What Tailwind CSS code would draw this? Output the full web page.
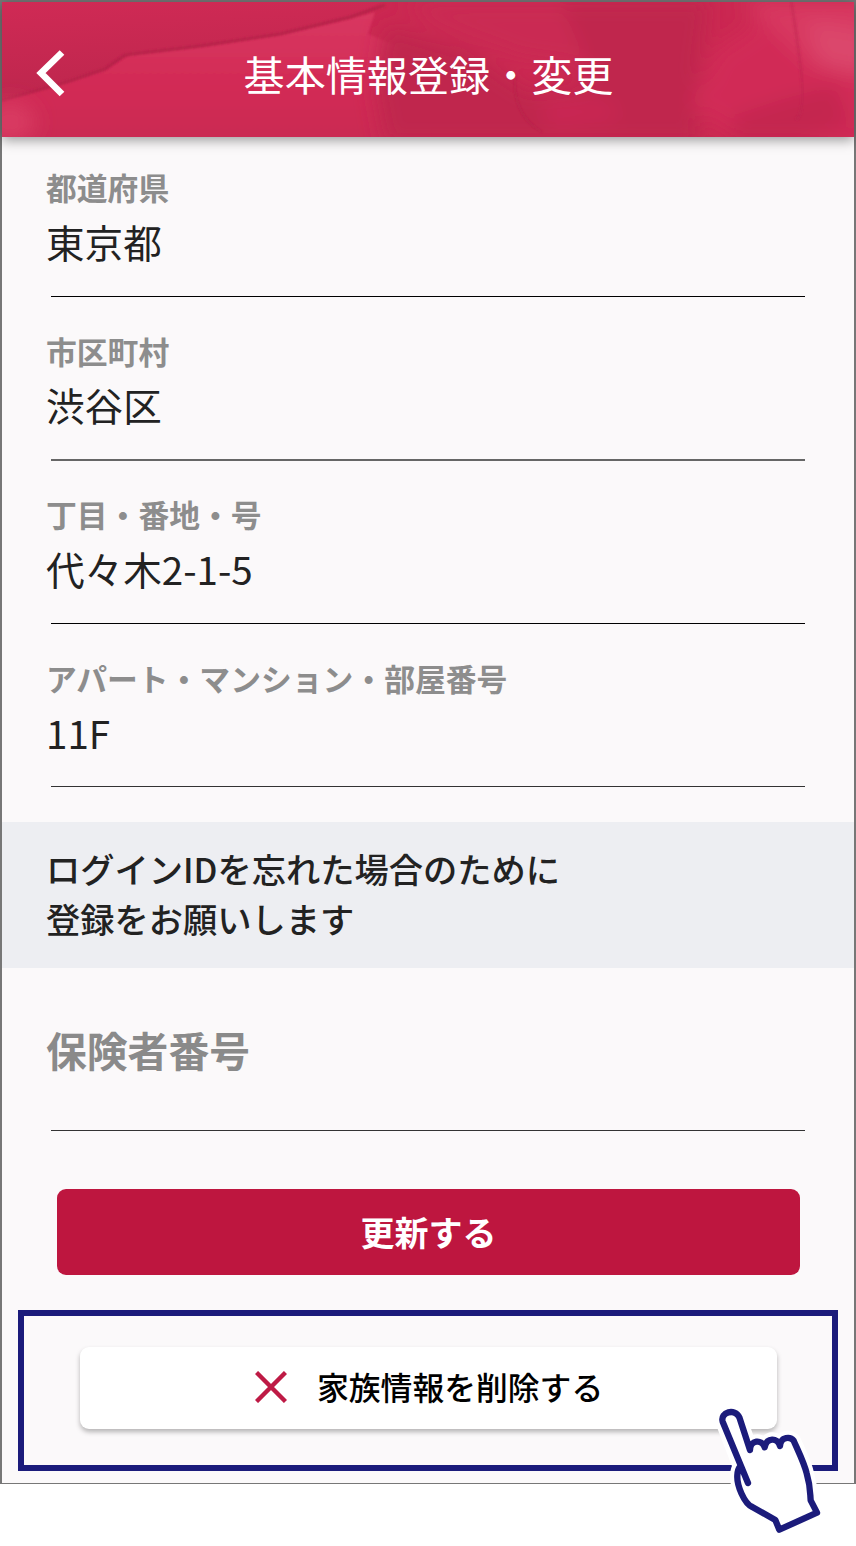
<!DOCTYPE html>
<html lang="ja">
<head>
    <meta charset="UTF-8">
    <meta name="viewport" content="width=device-width, initial-scale=1.0">
    <title>基本情報登録・変更</title>
    <script src="https://cdn.jsdelivr.net/npm/@tailwindcss/browser@4"></script>
</head>
<body class="bg-white font-['Noto_Sans_CJK_JP',sans-serif] text-[#222]">
    <div class="relative w-[856px] h-[1546px] overflow-hidden">
        <div class="flex flex-col h-[1484px] border-2 border-b-[1.5px] border-[#777] bg-[#fbf9fa]">
            <header class="relative z-10 flex items-center justify-center shrink-0 h-[135px] bg-[#cb2851] shadow-[0_3px_12px_rgba(0,0,0,0.4)]">
                <!-- watercolor wash -->
                <svg class="absolute inset-0 w-full h-full" viewBox="2 2 852 135" preserveAspectRatio="none">
                    <defs>
                        <filter id="soft" x="-30%" y="-30%" width="160%" height="160%"><feGaussianBlur stdDeviation="10" /></filter>
                        <filter id="edge" x="-10%" y="-10%" width="120%" height="120%"><feGaussianBlur stdDeviation="1.3" /></filter>
                        <linearGradient id="top" x1="0" y1="0" x2="0.15" y2="1">
                            <stop offset="0" stop-color="#d02a55" />
                            <stop offset="1" stop-color="#bd264d" />
                        </linearGradient>
                        <linearGradient id="sheet" x1="0" y1="0" x2="0" y2="1">
                            <stop offset="0" stop-color="#d93861" />
                            <stop offset="0.6" stop-color="#d22a55" />
                            <stop offset="1" stop-color="#ca2952" />
                        </linearGradient>
                    </defs>
                    <path d="M0 0H385L350 18L280 34L200 46L130 54L105 69L70 81L0 101Z" fill="url(#top)" />
                    <path d="M0 102L70 82L105 70L130 55L200 47L280 35L350 19L375 12L368 34L430 60V140H0Z" fill="url(#sheet)" filter="url(#edge)" />
                    <path d="M0 101L70 81L105 69L125 55L200 46L280 34L350 17L385 5" fill="none" stroke="#b52149" stroke-width="2.5" filter="url(#edge)" />
                    <g filter="url(#soft)">
                        <ellipse cx="10" cy="122" rx="25" ry="20" fill="#d93a62" />
                        <path d="M385 25L470 50L530 90L700 70V145H385L375 90Z" fill="#c0264d" />
                        <path d="M560 0H710L690 145H610L580 70Z" fill="#c0264d" />
                        <path d="M400 0H560L590 70L520 60L430 25Z" fill="#ca2953" />
                        <path d="M540 95L610 100L620 120L550 130Z" fill="#c92852" />
                        <path d="M715 50L790 0H870V145H740L690 105Z" fill="#d12b56" />
                        <path d="M740 0H870V80L810 65Z" fill="#d83760" />
                        <path d="M805 20L870 30V75L820 65Z" fill="#db476c" />
                        <path d="M735 115L780 100L835 85L850 125L790 145H730Z" fill="#c42750" />
                    </g>
                    <path d="M791 0Q796 30 801 70T796 120" fill="none" stroke="#bd2850" stroke-opacity="0.45" stroke-width="3" filter="url(#edge)" />
                    <path d="M515 75Q512 115 542 132" fill="none" stroke="#ae1e46" stroke-opacity="0.4" stroke-width="2" filter="url(#edge)" />
                </svg>
                <button class="absolute left-[34px] top-[47px]" aria-label="戻る">
                    <svg class="block" width="30" height="48" viewBox="0 0 30 48" fill="none" stroke="#fff" stroke-width="6.6"><path d="M26 3.5L5 24L26 45" /></svg>
                </button>
                <h1 class="relative pt-[6px] pl-px text-[41.1px] leading-[60px] font-normal text-white">基本情報登録・変更</h1>
            </header>

            <main class="flex flex-col pt-[27px]">
                <section class="px-11">
                    <div class="h-[163.5px]">
                        <p class="text-[30.8px] leading-[46px] font-bold text-[#8d8d8d]">都道府県</p>
                        <p class="text-[38.6px] leading-[62px] font-normal">東京都</p>
                        <div class="mt-6 ml-[5px] mr-[5px] h-px bg-black"></div>
                    </div>
                    <div class="h-[163.5px]">
                        <p class="text-[30.8px] leading-[45px] font-bold text-[#8d8d8d]">市区町村</p>
                        <p class="text-[38.6px] leading-[63px] font-normal">渋谷区</p>
                        <div class="mt-[23.5px] ml-[5px] mr-[5px] h-0.5 bg-[#666]"></div>
                    </div>
                    <div class="h-[163.5px]">
                        <p class="text-[30.8px] leading-[46px] font-bold text-[#8d8d8d]">丁目・番地・号</p>
                        <p class="text-[38.6px] leading-[62px] font-normal">代々木2-1-5</p>
                        <div class="mt-6 ml-[5px] mr-[5px] h-px bg-black"></div>
                    </div>
                    <div class="h-[167.5px]">
                        <p class="text-[30.8px] leading-[45px] font-bold text-[#8d8d8d]">アパート・マンション・部屋番号</p>
                        <p class="text-[38.6px] leading-[64px] font-normal">11F</p>
                        <div class="mt-[22px] ml-[5px] mr-[5px] h-px bg-[#333]"></div>
                    </div>
                </section>

                <div class="h-[146px] px-11 pt-[21px] bg-[#edeef2] text-[34.25px] leading-[50px] font-medium">
                    ログインIDを忘れた場合のために<br>登録をお願いします
                </div>

                <div class="h-[163px] px-11 pt-[52px]">
                    <p class="text-[40.8px] leading-[60px] font-bold text-[#8a8a8a]">保険者番号</p>
                    <div class="mt-[50px] ml-[5px] mr-[5px] h-px bg-[#333]"></div>
                </div>

                <button class="mt-[58px] ml-[55px] w-[743px] h-[86px] rounded-[9px] bg-[#be163f] text-[34px] leading-[50px] font-bold text-white">更新する</button>

                <div class="mt-[35px] ml-4 w-[820px] h-[161px] border-[6px] border-[#1b1b7b] pt-[31px] pl-14">
                    <button class="flex items-center w-[697px] h-[82px] pb-0.5 pl-[175px] rounded-[9px] bg-white shadow-[0_3px_5px_rgba(0,0,0,0.28)]">
                        <svg width="32" height="32" viewBox="0 0 32 32" fill="none" stroke="#be1a45" stroke-width="4.4"><path d="M1.5 1.5L30.5 30.5M30.5 1.5L1.5 30.5" /></svg>
                        <span class="ml-[30px] pb-0.5 text-[31.8px] leading-[48px] font-medium text-black">家族情報を削除する</span>
                    </button>
                </div>
            </main>
        </div>

        <!-- pointing hand -->
        <svg class="absolute left-[690px] top-[1380px]" width="166" height="166" viewBox="0 0 498 498" stroke-linejoin="round" stroke-linecap="round">
            <path d="M150 260L98 125C90 96 135 84 148 112L180 205C184 180 214 178 224 202C230 172 262 172 270 198C272 168 302 170 311 182C326 216 343 250 350 280C362 320 360 340 362 361L381 398L268 449L256 420L187 381C162 370 140 315 142 286Q143 268 150 260Z" fill="#fff" stroke="#fff" stroke-width="44" />
            <path d="M174 309L98 125C90 96 135 84 148 112L180 210C180 180 216 176 224 202C230 172 262 172 270 198C272 168 302 170 311 182C326 216 343 250 350 280C362 320 360 340 362 361L381 398L268 449L256 420L187 381C162 370 140 315 142 286Q143 268 150 260" fill="#fff" stroke="#1b1b7b" stroke-width="19" />
        </svg>
    </div>
</body>
</html>
